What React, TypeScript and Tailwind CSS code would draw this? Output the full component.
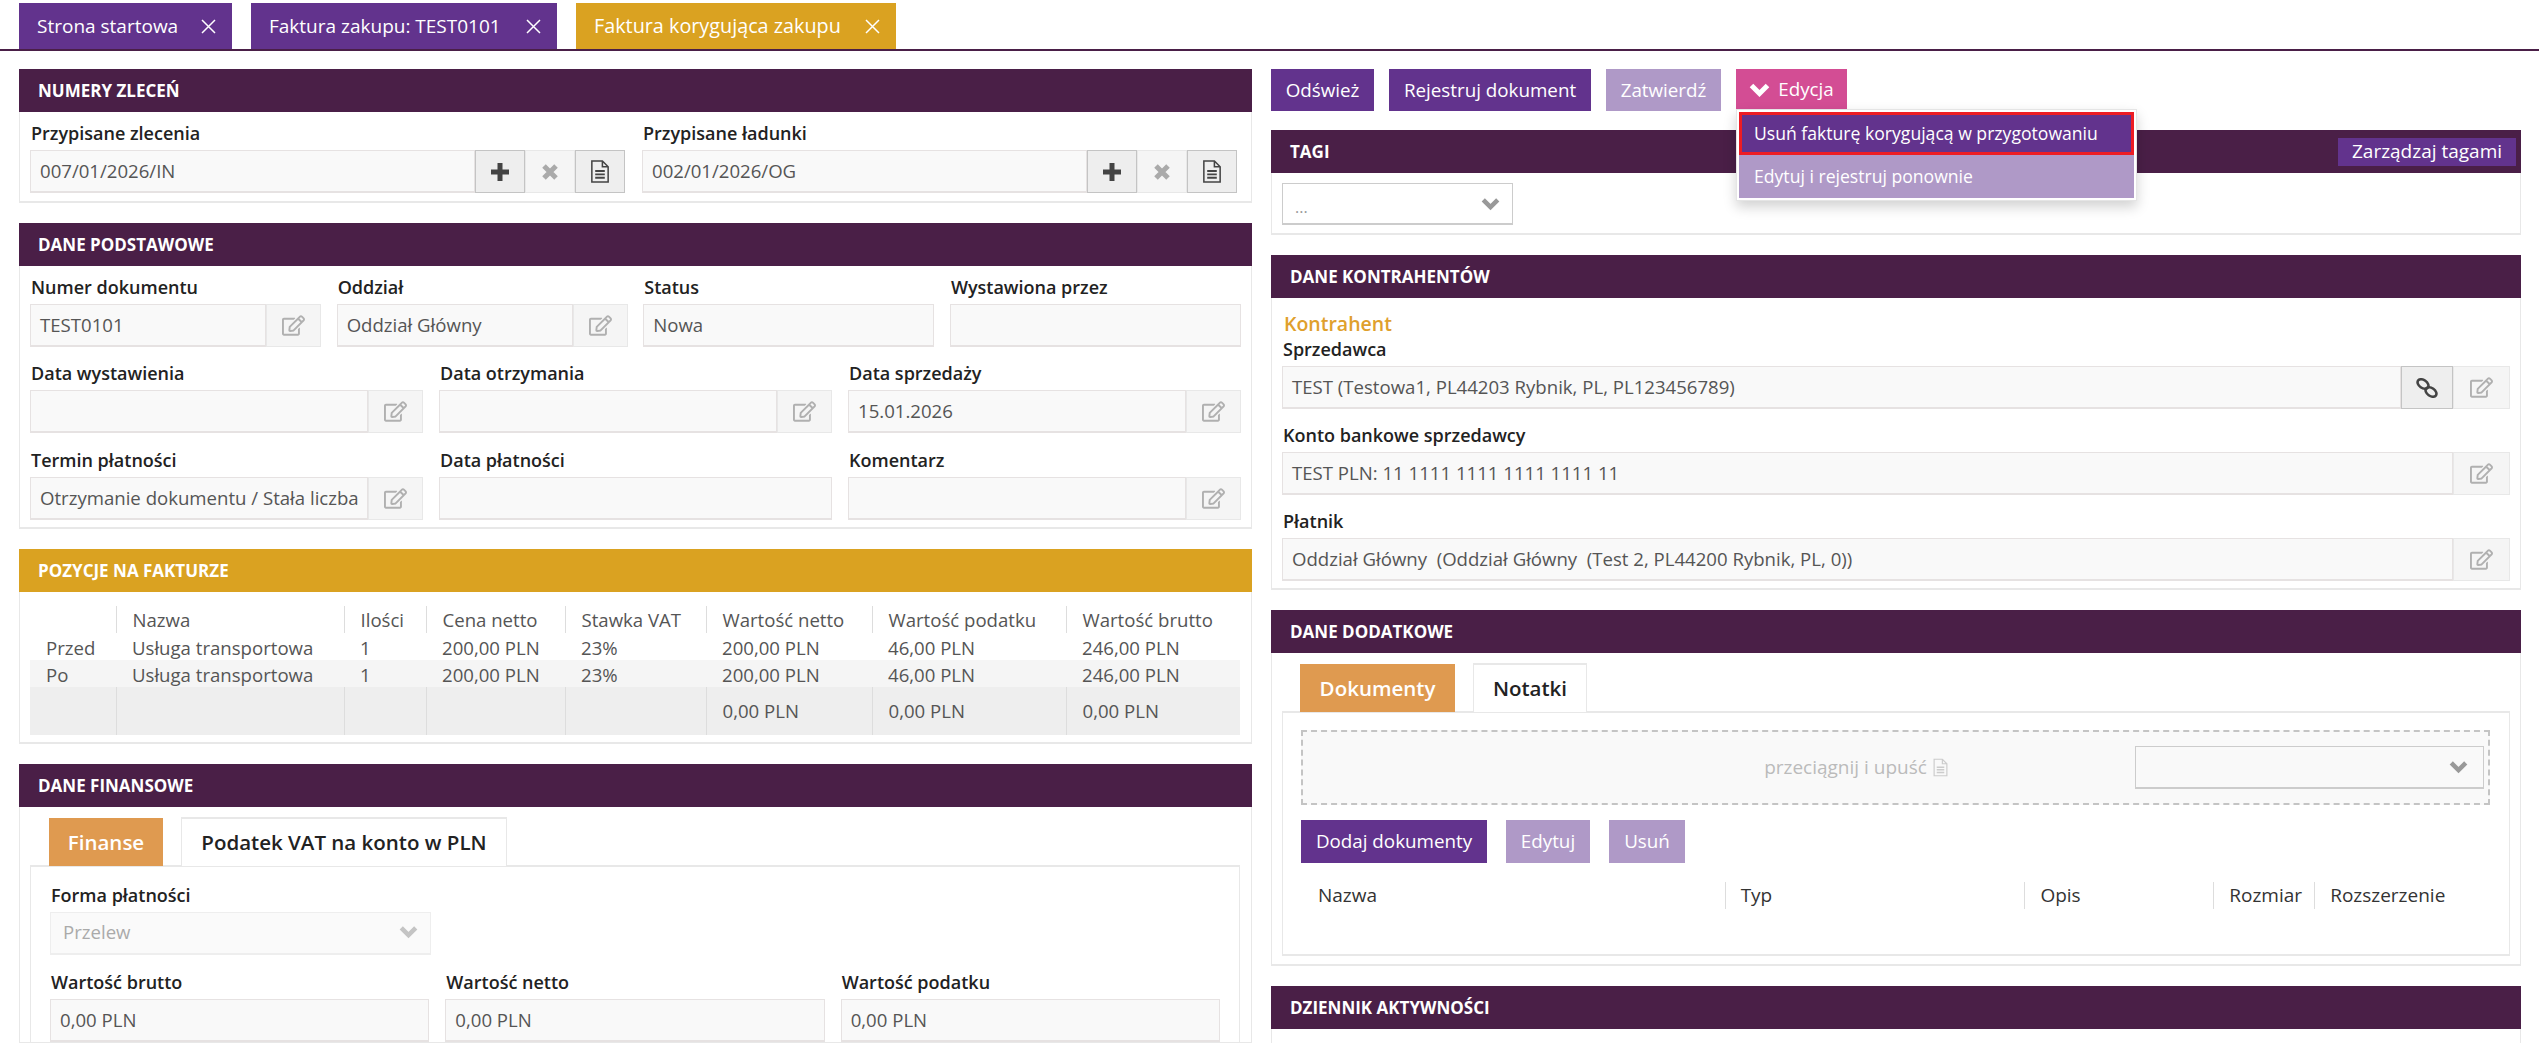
import React from 'react';
import { FaRegEdit } from 'react-icons/fa';

const PlusIcon = () => (
  <svg viewBox="0 0 18 18" className="h-[18px] w-[18px] text-[#444]" fill="none" stroke="currentColor" strokeWidth="5">
    <path d="M0 9h18M9 0v18" />
  </svg>
);

const CrossIcon = () => (
  <svg viewBox="0 0 16 16" className="h-[16px] w-[16px] text-[#aaa]" fill="none" stroke="currentColor" strokeWidth="5">
    <path d="M2 2l12 12M14 2L2 14" />
  </svg>
);

const DocIcon = ({ className }: { className: string }) => (
  <svg viewBox="0 0 20 24" className={className} fill="none" stroke="currentColor" strokeWidth="1.6">
    <path d="M1.5 1h11l6 6v16h-17zM12.5 1v6h6" />
    <path d="M5 11.5h10M5 15h10M5 18.5h10" strokeWidth="2" />
  </svg>
);

const ChainIcon = () => (
  <svg viewBox="0 0 22 20" className="h-[20px] w-[22px] text-[#444]" fill="none" stroke="currentColor" strokeWidth="2.6">
    <ellipse cx="7" cy="6" rx="6" ry="4" transform="rotate(35 7 6)" />
    <ellipse cx="15" cy="14" rx="6" ry="4" transform="rotate(35 15 14)" />
  </svg>
);

const Chevron = ({ className }: { className: string }) => (
  <svg viewBox="0 0 21 14" className={className} fill="none" stroke="currentColor" strokeWidth="5">
    <path d="M2.5 2.5l8 8 8-8" />
  </svg>
);

const PanelHeader = ({ title, gold, children }: { title: string; gold?: boolean; children?: React.ReactNode }) => (
  <div className={`flex h-[43px] items-center justify-between pl-[19px] pr-[5px] ${gold ? 'bg-[#daa221]' : 'bg-[#4a1f47]'}`}>
    <span className="text-[17px] font-bold uppercase text-white">{title}</span>
    {children}
  </div>
);

const Panel = ({ title, gold, action, className, children }: { title: string; gold?: boolean; action?: React.ReactNode; className?: string; children?: React.ReactNode }) => (
  <section className="mb-[20px]">
    <PanelHeader title={title} gold={gold}>{action}</PanelHeader>
    <div className={`border-x border-b-2 border-[#e8e8e8] ${className ?? ''}`}>{children}</div>
  </section>
);

const Label = ({ children }: { children: React.ReactNode }) => (
  <label className="mb-[5px] block h-[23px] whitespace-nowrap pl-[1px] text-[18px] font-semibold leading-[23px] text-[#222]">{children}</label>
);

const IconBtn = ({ icon, active, w = 'w-[50px]' }: { icon: React.ReactNode; active?: boolean; w?: string }) => (
  <span className={`flex h-full shrink-0 items-center justify-center border ${w} ${active ? 'border-[#c4c4c4] bg-[#eeeeee] text-[#555]' : 'border-[#e8e8e8] bg-[#f5f5f5] text-[#b0b0b0]'}`}>
    {icon}
  </span>
);

const EditBtn = ({ w = 'w-[55px]' }: { w?: string }) => <IconBtn w={w} icon={<FaRegEdit className="h-[23px] w-[23px]" />} />;

const Field = ({ label, value, children }: { label: string; value?: string; children?: React.ReactNode }) => (
  <div className="min-w-0">
    <Label>{label}</Label>
    <div className="flex h-[43px]">
      <div className="flex min-w-0 flex-1 items-center border border-b-2 border-[#e6e2e2] bg-[#f9f9f9] px-[9px] text-[18.6px] text-[#555]">
        <span className="whitespace-pre">{value}</span>
      </div>
      {children}
    </div>
  </div>
);

const ActionBtn = ({ children, light, pink, className }: { children: React.ReactNode; light?: boolean; pink?: boolean; className?: string }) => (
  <button className={`flex items-center justify-center whitespace-nowrap text-[18.8px] text-white ${pink ? 'bg-[#d34d94]' : light ? 'bg-[#af99c7]' : 'bg-[#62338d]'} ${className ?? ''}`}>
    {children}
  </button>
);

const PageTab = ({ label, active, w }: { label: string; active?: boolean; w: string }) => (
  <div className={`flex h-[46px] items-center justify-between pl-[18px] pr-[16px] text-white ${w} ${active ? 'bg-[#daa221] text-[19.8px]' : 'bg-[#62338d] text-[19px]'}`}>
    <span>{label}</span>
    <svg viewBox="0 0 15 15" className="h-[15px] w-[15px]" fill="none" stroke="currentColor" strokeWidth="1.5">
      <path d="M1 1l13 13M14 1L1 14" />
    </svg>
  </div>
);

const InnerTab = ({ label, active, w }: { label: string; active?: boolean; w: string }) => (
  <div className={`relative z-10 flex items-center justify-center text-[20.5px] font-semibold ${w} ${active ? 'mt-[1px] h-[48px] bg-[#df9a50] text-white' : 'h-[49px] border-x border-t-2 border-[#e8e8e8] bg-white text-[#222]'}`}>
    {label}
  </div>
);

const Th = ({ children }: { children?: React.ReactNode }) => (
  <th className="h-[27px] border-l border-[#dddddd] pl-[16px] text-left font-normal first:border-l-0">{children}</th>
);

const positions = [
  ['Przed', 'Usługa transportowa', '1', '200,00 PLN', '23%', '200,00 PLN', '46,00 PLN', '246,00 PLN'],
  ['Po', 'Usługa transportowa', '1', '200,00 PLN', '23%', '200,00 PLN', '46,00 PLN', '246,00 PLN'],
];

export default function App() {
  return (
    <div className="h-[1043px] w-[2539px] overflow-hidden bg-white font-['Open_Sans',sans-serif] text-[#555]">
      <div className="flex h-[51px] gap-[19px] border-b-2 border-[#4a1f47] pl-[19px] pt-[3px]">
        <PageTab label="Strona startowa" w="w-[213px]" />
        <PageTab label="Faktura zakupu: TEST0101" w="w-[306px]" />
        <PageTab label="Faktura korygująca zakupu" active w="w-[320px]" />
      </div>

      <div className="flex gap-[19px] pl-[19px] pt-[18px]">
        {/* lewa kolumna */}
        <div className="w-[1233px] shrink-0">
          <Panel title="Numery zleceń" className="grid grid-cols-2 gap-x-[17px] pb-[8px] pl-[10px] pr-[14px] pt-[10px]">
            {['007/01/2026/IN', '002/01/2026/OG'].map((v, i) => (
              <Field key={v} label={i === 0 ? 'Przypisane zlecenia' : 'Przypisane ładunki'} value={v}>
                <IconBtn active icon={<PlusIcon />} />
                <IconBtn icon={<CrossIcon />} />
                <IconBtn active icon={<DocIcon className="h-[23px] w-[20px] text-[#444]" />} />
              </Field>
            ))}
          </Panel>

          <Panel title="Dane podstawowe" className="pb-[7px] pl-[10px] pr-[10px] pt-[10px]">
            <div className="grid grid-cols-4 gap-x-[15.5px]">
              <Field label="Numer dokumentu" value="TEST0101"><EditBtn /></Field>
              <Field label="Oddział" value="Oddział Główny"><EditBtn /></Field>
              <Field label="Status" value="Nowa" />
              <Field label="Wystawiona przez" />
            </div>
            <div className="mt-[15px] grid grid-cols-3 gap-x-[16px] gap-y-[16px]">
              <Field label="Data wystawienia"><EditBtn /></Field>
              <Field label="Data otrzymania"><EditBtn /></Field>
              <Field label="Data sprzedaży" value="15.01.2026"><EditBtn /></Field>
              <Field label="Termin płatności" value="Otrzymanie dokumentu / Stała liczba"><EditBtn /></Field>
              <Field label="Data płatności" />
              <Field label="Komentarz"><EditBtn /></Field>
            </div>
          </Panel>

          <Panel title="Pozycje na fakturze" gold className="pb-[7px] pl-[10px] pr-[12px] pt-[14px]">
            <table className="w-[1210px] table-fixed border-collapse text-[18.6px] leading-[20px] text-[#555]">
              <colgroup>
                <col className="w-[86px]" />
                <col className="w-[228px]" />
                <col className="w-[82px]" />
                <col className="w-[139px]" />
                <col className="w-[141px]" />
                <col className="w-[166px]" />
                <col className="w-[194px]" />
                <col className="w-[174px]" />
              </colgroup>
              <thead>
                <tr>
                  {['', 'Nazwa', 'Ilości', 'Cena netto', 'Stawka VAT', 'Wartość netto', 'Wartość podatku', 'Wartość brutto'].map((h) => (
                    <Th key={h}>{h}</Th>
                  ))}
                </tr>
              </thead>
              <tbody>
                {positions.map((row, i) => (
                  <tr key={row[0]} className={`h-[27px] ${i === 1 ? 'bg-[#f5f5f5]' : ''}`}>
                    {row.map((c, j) => (
                      <td key={j} className="pl-[16px] pt-[2px]">{c}</td>
                    ))}
                  </tr>
                ))}
                <tr className="h-[48px] bg-[#eeeeee]">
                  {['', '', '', '', '', '0,00 PLN', '0,00 PLN', '0,00 PLN'].map((c, j) => (
                    <td key={j} className="border-l border-[#dddddd] pl-[16px] first:border-l-0">{c}</td>
                  ))}
                </tr>
              </tbody>
            </table>
          </Panel>

          <Panel title="Dane finansowe" className="pl-[10px] pr-[11px] pt-[10px]">
            <div className="flex gap-[18px] pl-[19px]">
              <InnerTab label="Finanse" active w="w-[114px]" />
              <InnerTab label="Podatek VAT na konto w PLN" w="w-[326px]" />
            </div>
            <div className="-mt-[1px] border-x border-t-2 border-[#e8e8e8] px-[19px] pt-[17px]">
              <Label>Forma płatności</Label>
              <div className="flex h-[43px] w-[381px] items-center justify-between border border-b-2 border-[#eeeeee] bg-[#fafafa] px-[12px] pb-[2px] text-[18.6px] text-[#aaa]">
                <span>Przelew</span>
                <Chevron className="h-[14px] w-[19px] text-[#c4c4c4]" />
              </div>
              <div className="mt-[16px] grid grid-cols-3 gap-x-[16px]">
                <Field label="Wartość brutto" value="0,00 PLN" />
                <Field label="Wartość netto" value="0,00 PLN" />
                <Field label="Wartość podatku" value="0,00 PLN" />
              </div>
            </div>
          </Panel>
        </div>

        {/* prawa kolumna */}
        <div className="w-[1250px] shrink-0">
          <div className="relative mb-[19px] flex h-[42px] gap-[15px]">
            <ActionBtn className="w-[103px]">Odśwież</ActionBtn>
            <ActionBtn className="w-[202px]">Rejestruj dokument</ActionBtn>
            <ActionBtn light className="w-[115px]">Zatwierdź</ActionBtn>
            <ActionBtn pink className="h-[41px] w-[111px] gap-[8px]">
              <Chevron className="h-[14px] w-[21px]" />
              Edycja
            </ActionBtn>
            <div className="absolute left-[465px] top-[40px] z-20 w-[401px] border border-[#e5e5e5] bg-white p-[2px] shadow-[0_6px_12px_rgba(0,0,0,0.18)]">
              <div className="flex h-[43px] items-center border-[3px] border-[#ed1c24] bg-[#62338d] px-[12px] text-[17.6px] text-white">
                Usuń fakturę korygującą w przygotowaniu
              </div>
              <div className="flex h-[43px] items-center bg-[#af99c7] px-[15px] text-[17.6px] text-white">
                Edytuj i rejestruj ponownie
              </div>
            </div>
          </div>

          <Panel
            title="Tagi"
            action={<span className="flex h-[28px] w-[178px] items-center justify-center bg-[#62338d] text-[19px] text-white">Zarządzaj tagami</span>}
            className="pb-[8px] pl-[10px] pt-[10px]"
          >
            <div className="flex h-[42px] w-[231px] items-center justify-between border border-b-2 border-[#cccccc] bg-white px-[12px] text-[16px] text-[#999]">
              <span className="pt-[6px]">...</span>
              <Chevron className="h-[14px] w-[19px] text-[#999]" />
            </div>
          </Panel>

          <Panel title="Dane kontrahentów" className="pb-[7px] px-[10px] pt-[14px]">
            <div className="h-[26px] pl-[2px] text-[19.5px] font-semibold leading-[24px] text-[#dfa02c]">Kontrahent</div>
            <Field label="Sprzedawca" value="TEST (Testowa1, PL44203 Rybnik, PL, PL123456789)">
              <IconBtn active w="w-[52px]" icon={<ChainIcon />} />
              <EditBtn w="w-[57px]" />
            </Field>
            <div className="mt-[15px]">
              <Field label="Konto bankowe sprzedawcy" value="TEST PLN: 11 1111 1111 1111 1111 11"><EditBtn w="w-[57px]" /></Field>
            </div>
            <div className="mt-[15px]">
              <Field label="Płatnik" value="Oddział Główny  (Oddział Główny  (Test 2, PL44200 Rybnik, PL, 0))"><EditBtn w="w-[57px]" /></Field>
            </div>
          </Panel>

          <Panel title="Dane dodatkowe" className="pb-[8px] px-[10px] pt-[10px]">
            <div className="flex gap-[18px] pl-[18px]">
              <InnerTab label="Dokumenty" active w="w-[155px]" />
              <InnerTab label="Notatki" w="w-[114px]" />
            </div>
            <div className="-mt-[1px] h-[245px] border-x border-b-2 border-t-2 border-[#e8e8e8] pl-[18px] pr-[19px] pt-[17px]">
              <div className="flex h-[75px] items-center border-2 border-dashed border-[#c4c4c4] bg-[#f9f9f9] pl-[2px] pr-[4px]">
                <div className="flex flex-1 items-center justify-center gap-[6px] pl-[272px] text-[19px] text-[#bbb]">
                  przeciągnij i upuść
                  <DocIcon className="h-[19px] w-[15px] text-[#ccc]" />
                </div>
                <div className="flex h-[43px] w-[349px] items-center justify-end border border-b-2 border-[#cccccc] bg-transparent pr-[15px]">
                  <Chevron className="h-[14px] w-[19px] text-[#999]" />
                </div>
              </div>
              <div className="mt-[15px] flex h-[43px] gap-[19px]">
                <ActionBtn className="w-[186px]">Dodaj dokumenty</ActionBtn>
                <ActionBtn light className="w-[84px]">Edytuj</ActionBtn>
                <ActionBtn light className="w-[76px]">Usuń</ActionBtn>
              </div>
              <div className="mt-[19px] flex h-[27px] items-center text-[19px] text-[#333]">
                <div className="w-[424px] pl-[17px]">Nazwa</div>
                <div className="flex h-full w-[300px] items-center border-l border-[#dddddd] pl-[15px]">Typ</div>
                <div className="flex h-full w-[189px] items-center border-l border-[#dddddd] pl-[15px]">Opis</div>
                <div className="flex h-full w-[101px] items-center border-l border-[#dddddd] pl-[15px]">Rozmiar</div>
                <div className="flex h-full w-[176px] items-center border-l border-[#dddddd] pl-[15px]">Rozszerzenie</div>
              </div>
            </div>
          </Panel>

          <Panel title="Dziennik aktywności" className="h-[20px]" />
        </div>
      </div>
    </div>
  );
}
